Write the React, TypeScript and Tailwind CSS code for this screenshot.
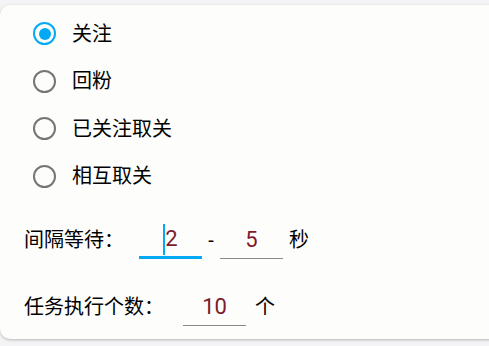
import React from "react";

const options = ["关注", "回粉", "已关注取关", "相互取关"];

const Radio: React.FC<{ checked?: boolean }> = ({ checked }) => (
  <span
    className={`flex items-center justify-center w-[23px] h-[23px] rounded-full border-[2.5px] ${
      checked ? "border-[#03a9f4]" : "border-[#757575]"
    }`}
  >
    {checked && <span className="w-[12px] h-[12px] rounded-full bg-[#03a9f4]" />}
  </span>
);

const NumberField: React.FC<{ value: string; focused?: boolean }> = ({
  value,
  focused,
}) => (
  <div
    className={`flex items-center justify-center w-[63px] h-[37px] ${
      focused ? "border-b-[3px] border-[#03a9f4]" : "border-b-[1.5px] border-[#8a8a8a]"
    }`}
  >
    {focused && <span className="w-[2px] h-[31px] bg-[#03a9f4]" />}
    <span className="text-[22px] text-[#7d1a2c] leading-none">{value}</span>
  </div>
);

export default function App() {
  const [selected, setSelected] = React.useState(0);

  return (
    <div
      className="w-[489px] h-[346px] bg-[#f4f4f6] pt-[5px] overflow-hidden"
      style={{ fontFamily: 'Roboto, "Noto Sans CJK SC", sans-serif' }}
    >
      <div className="w-[510px] h-[334px] bg-[#fdfdfb] rounded-[10px] shadow-[0_1px_3px_rgba(0,0,0,0.25)] pt-[5px]">
        {/* 选项 */}
        {options.map((label, i) => (
          <div
            key={label}
            className="flex items-center h-[47.5px] pl-[33px] cursor-pointer"
            onClick={() => setSelected(i)}
          >
            <Radio checked={selected === i} />
            <span className="ml-[16px] text-[20px] text-black leading-none">
              {label}
            </span>
          </div>
        ))}

        {/* 间隔等待 */}
        <div className="flex items-center pl-[24px] mt-[20px] text-[20px] text-black">
          <span className="w-[115px] leading-none">间隔等待：</span>
          <div className="pt-[2px]">
            <NumberField value="2" focused />
          </div>
          <span className="w-[18px] text-center leading-none">-</span>
          <div className="pt-[2px]">
            <NumberField value="5" />
          </div>
          <span className="ml-[6px] leading-none">秒</span>
        </div>

        {/* 任务执行个数 */}
        <div className="flex items-center pl-[24px] mt-[28px] text-[20px] text-black">
          <span className="w-[159px] leading-none">任务执行个数：</span>
          <div className="pt-[2px]">
            <NumberField value="10" />
          </div>
          <span className="ml-[9px] leading-none">个</span>
        </div>
      </div>
    </div>
  );
}
